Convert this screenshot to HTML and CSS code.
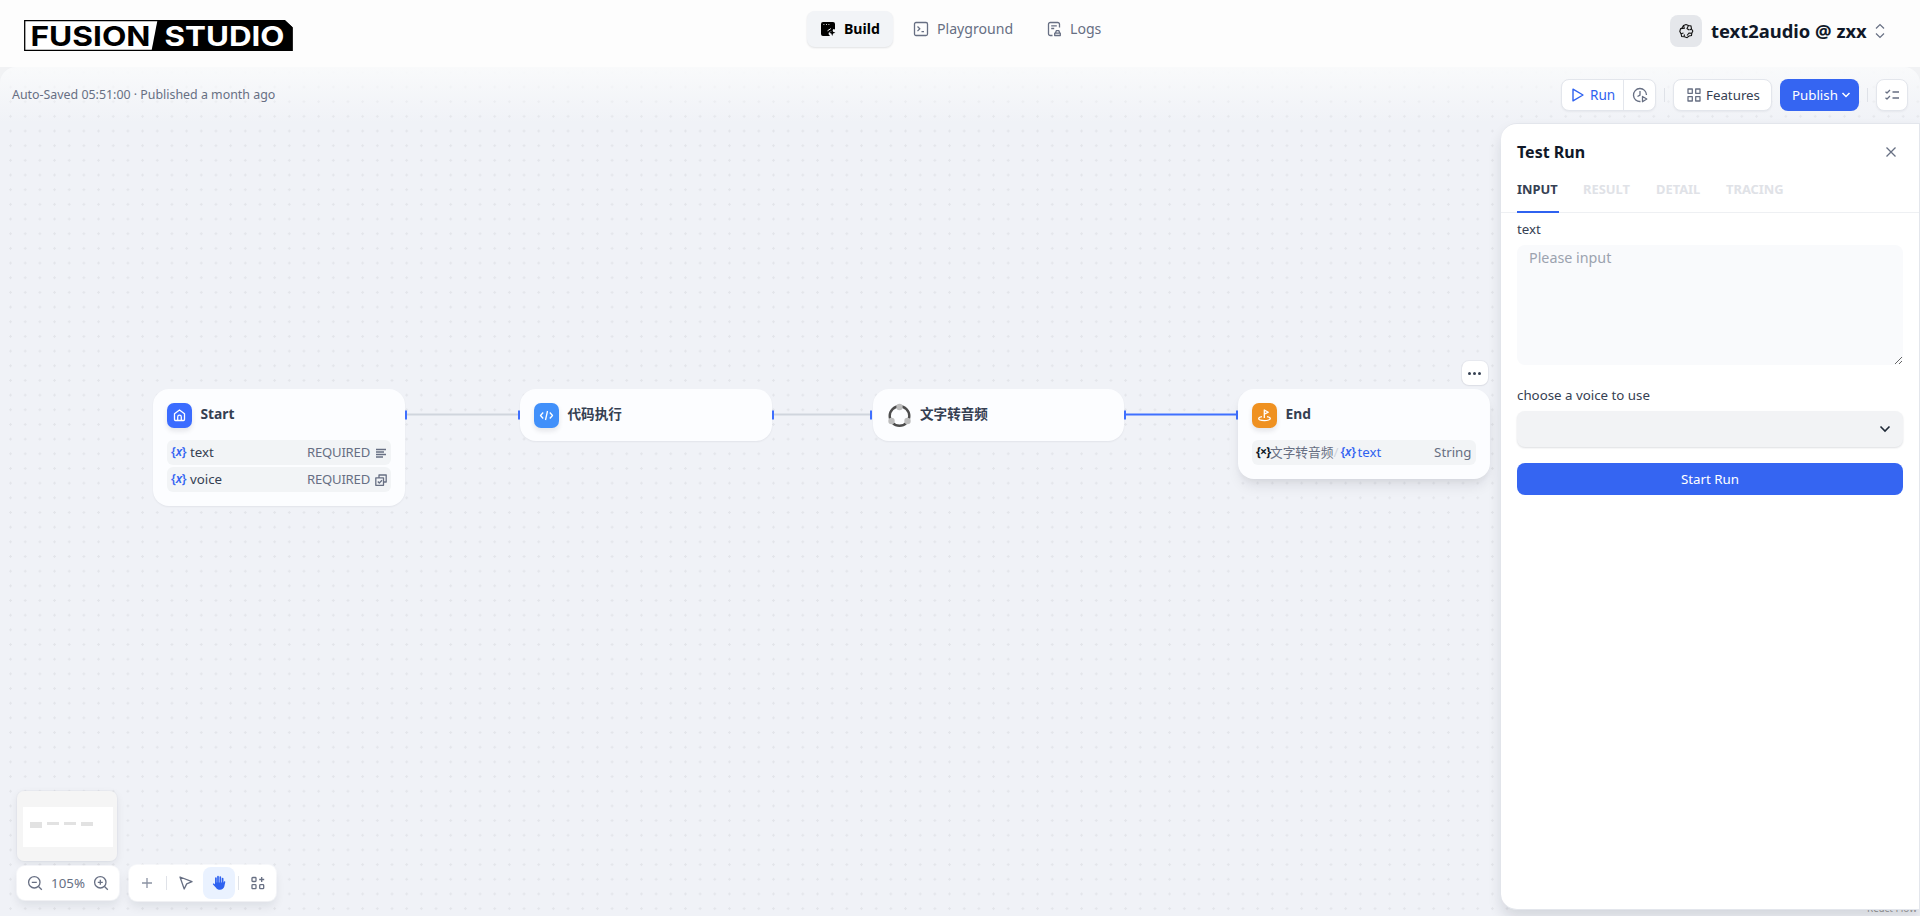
FILE: index.html
```html
<!DOCTYPE html>
<html lang="en">
<head>
<meta charset="utf-8">
<title>Fusion Studio</title>
<link rel="stylesheet" href="styles.css">
</head>
<body>
<header class="header">
  <svg class="logo" viewBox="0 0 270 32" width="270" height="32">
    <path d="M.7.700H260.500L268 7.500V30.300H.7Z" fill="#fff" stroke="#000" stroke-width="1.300"/>
    <path d="M133.500 0H260.800L268.600 7.500V31H127.500Z"/>
    <text class="logo-text" x="6.500" y="25.500" textLength="120" lengthAdjust="spacingAndGlyphs">FUSION</text>
    <text class="logo-text logo-light" x="140.500" y="25.500" textLength="120" lengthAdjust="spacingAndGlyphs">STUDIO</text>
  </svg>
  <nav class="nav">
    <a class="nav-item active">
      <svg class="i16" viewBox="0 0 16 16"><path d="M3 1h10a2 2 0 0 1 2 2v5.500l-1.500-.5-2 2.500L9 11l-.5 2 1.500 2H3a2 2 0 0 1-2-2V3a2 2 0 0 1 2-2z" fill="#000"/><path d="M3.500 3.500h.8M6 3.500h.8M8.500 3.500h.8" stroke="#fff" stroke-width="1"/><path d="M7.500 9.800 10.800 7.600" stroke="#fff" stroke-width="1"/><path d="m12.200 8.500.9 2.300 2.300.9-2.300.9-.9 2.400-.9-2.400-2.300-.9 2.300-.9z" fill="#000"/></svg>
      <span>Build</span></a>
    <a class="nav-item play">
      <svg class="i16 line" viewBox="0 0 16 16"><rect x="1.500" y="1.500" width="13" height="13" rx="1.500"/><path d="m4.500 5.500 2.300 2.300-2.300 2.300M8.500 10.700H11"/></svg>
      <span>Playground</span></a>
    <a class="nav-item logs">
      <svg class="i16 line" viewBox="0 0 16 16"><path d="M13.500 6.500V3.300A1.800 1.800 0 0 0 11.700 1.500H4.300a1.800 1.800 0 0 0-1.800 1.800v9.400a1.800 1.800 0 0 0 1.800 1.800H6.500M5.200 4.800h5.600M5.200 7.500h3"/><path d="M8.700 12.200h5.600v2.300H8.700zM9.500 12l.8-2.300h2.600l.8 2.300"/></svg>
      <span>Logs</span></a>
  </nav>
  <div class="app">
    <div class="app-icon"><svg width="16" height="16" viewBox="0 0 16 16" fill="none" stroke="#111" stroke-width="1.100"><path d="M5.500 2.500 8 1.500l2.500 1 2.500.5.500 3 1.300 2-1 2.300-.3 2.200-2.500.5-2 1.700-2.500-1-2.800-.2-.7-2.800L1.800 8.500l.7-2.700L4 5z"/><path d="m5.500 2.500.8 2.800-3.800.5M10.500 2.500 9 5.500l2 1.500M13.500 6l-2 1M3 10.700l2.500-.7M14 10.300l-3-.3-2 2.500M6 13.500l.5-2"/></svg></div>
    <span class="app-name">text2audio @ zxx</span>
    <svg class="updown" width="12" height="16" viewBox="0 0 12 16"><path d="m2 5.500 4-4 4 4M2 10.500l4 4 4-4"/></svg>
  </div>
</header>

<main class="canvas">
  <div class="toolbar">
    <span class="saved">Auto-Saved 05:51:00 · Published a month ago</span>
    <div class="actions">
      <div class="btn run-group">
        <span class="run"><svg width="16" height="16" viewBox="0 0 16 16"><path d="M3 2.200 13 8 3 13.800z" fill="none" stroke="#2f62f0" stroke-width="1.400" stroke-linejoin="round"/></svg><span>Run</span></span>
        <span class="history"><svg class="i16 line" viewBox="0 0 16 16"><path d="M8.500 14.500A6.500 6.500 0 1 1 14.500 8M8 4v4.200L5.500 9.500"/><path d="m10.500 9.500 4.300 2.500-4.300 2.700z"/></svg></span>
      </div>
      <i class="sep"></i>
      <div class="btn features"><svg width="14" height="14" viewBox="0 0 14 14" class="line"><path d="M1 1h4.300v4.300H1zM8.700 1H13v4.300H8.700zM1 8.700h4.300V13H1zM8.700 8.700H13V13H8.700z"/></svg><span>Features</span></div>
      <div class="publish"><span>Publish</span><svg width="10" height="10" viewBox="0 0 10 10"><path d="m1.500 3 3.500 3.500L8.500 3" fill="none" stroke="#fff" stroke-width="1.500"/></svg></div>
      <i class="sep"></i>
      <div class="btn checklist"><svg width="16" height="16" viewBox="0 0 16 16" class="line"><path d="m1.500 4.700 1.500 1.300 3-3M1.500 10.700 3 12l3-3M8.500 5H15M8.500 11H15"/></svg></div>
    </div>
  </div>

  <svg class="edges" width="1500" height="30">
    <path d="M406 14.500H519M774 14.500H871" stroke="#d0d5dd" stroke-width="2"/>
    <path d="M1125 14.500H1237" stroke="#3f70ff" stroke-width="2.200"/>
    <path d="M406 10.500v9M519 10.500v9M773 10.500v9M871 10.500v9M1125 10.500v9M1237 10.500v9" stroke="#3f70ff" stroke-width="2"/>
  </svg>

  <section class="node n-start">
    <div class="node-head"><i class="node-icon blue"><svg width="15" height="15" viewBox="0 0 15 15"><path d="M2.500 5.800 7.500 2l5 3.800V11.500a1 1 0 0 1-1 1h-8a1 1 0 0 1-1-1zM5.700 12.300V9a1.800 1.800 0 0 1 3.600 0v3.300"/></svg></i><b>Start</b></div>
    <div class="row"><em>{<i>x</i>}</em><span class="name">text</span><span class="req">REQUIRED</span><svg width="12" height="12" viewBox="0 0 12 12" class="line"><path d="M1 2.500h10M1 5h8M1 7.500h10M1 10h7"/></svg></div>
    <div class="row"><em>{<i>x</i>}</em><span class="name">voice</span><span class="req">REQUIRED</span><svg width="12" height="12" viewBox="0 0 12 12" class="line"><path d="M4 3.500V1h7.200v7H9M.8 3.800h7.700v7.500H.8zM2.800 7.500l1.500 1.500L7 6.200"/></svg></div>
  </section>

  <section class="node n-code">
    <div class="node-head"><i class="node-icon sky"><svg width="15" height="15" viewBox="0 0 15 15"><path d="M4.200 4.500 1.500 7.500l2.700 3M10.800 4.500l2.700 3-2.700 3M8.500 3l-2 9"/></svg></i><b>代码执行</b></div>
  </section>

  <section class="node n-audio">
    <div class="node-head"><i class="node-icon ring"><svg width="25" height="25" viewBox="0 0 25 25"><circle cx="12.500" cy="13" r="9.800" fill="none" stroke="#4d4d4d" stroke-width="2.400"/><g fill="#bdbdbd"><circle cx="12.500" cy="4" r="3.200"/><circle cx="4.500" cy="18" r="3.200"/><circle cx="20.500" cy="18" r="3.200"/></g></svg></i><b>文字转音频</b></div>
  </section>

  <div class="more"><i></i><i></i><i></i></div>
  <section class="node n-end">
    <div class="node-head"><i class="node-icon orange"><svg width="15" height="15" viewBox="0 0 15 15"><path d="M7.300 10V2l4 2.200-4 2M5 8.600c-2 .3-3.300 1-3.300 1.900 0 1.200 2.600 2.100 5.800 2.100s5.800-.9 5.800-2.100c0-.9-1.300-1.600-3.300-1.900"/></svg></i><b>End</b></div>
    <div class="row"><em class="dark">{×}</em><span class="source">文字转音频</span><span class="slash">/</span><em>{<i>x</i>}</em><span class="var">text</span><span class="type">String</span></div>
  </section>

  <div class="minimap">
    <svg width="90" height="40" viewBox="0 0 90 40"><path d="M0 0h90v40H0z" fill="#fff"/><path d="M7 15h12v6H7zM24 15h12v3H24zM41 15h12v3H41zM58 15h12v4H58z" fill="#e2e2e2"/></svg>
  </div>
  <div class="dock">
    <div class="zoombar">
      <svg class="i16 line" viewBox="0 0 16 16"><circle cx="7.300" cy="7.300" r="5.700"/><path d="m11.500 11.500 3.300 3.300M4.800 7.300h5"/></svg>
      <span>105%</span>
      <svg class="i16 line" viewBox="0 0 16 16"><circle cx="7.300" cy="7.300" r="5.700"/><path d="m11.500 11.500 3.300 3.300M4.800 7.300h5M7.300 4.800v5"/></svg>
    </div>
    <div class="tools">
      <span class="tool"><svg class="i16 line faint" viewBox="0 0 16 16"><path d="M8 3v10M3 8h10"/></svg></span>
      <i class="sep"></i>
      <span class="tool"><svg class="i16 line" viewBox="0 0 16 16"><path d="m2 2 12 4.700-5.300 2.200L6.200 14z"/></svg></span>
      <span class="tool on"><svg width="16" height="16" viewBox="0 0 16 16" fill="none" stroke="#2f62f0" stroke-linecap="round"><path d="M4.900 9V3.200M7 8V1.700M9.300 8V2M11.600 9V3.500" stroke-width="1.700"/><path d="M4 7.500h8.500c.2-1.500 2-1.800 1.800-.5l-1 4.500c-.5 2-2 3.200-4.300 3.200-2 0-3-.6-4-2L2 9.500c-.5-.9.600-1.500 1.300-.8L4 9.500z" fill="#2f62f0" stroke="none"/></svg></span>
      <i class="sep"></i>
      <span class="tool"><svg class="i16 line" viewBox="0 0 16 16"><rect x="2" y="2.500" width="4" height="4" rx=".8"/><rect x="2" y="9.700" width="4" height="4" rx=".8"/><rect x="9.700" y="9.700" width="4" height="4" rx=".8"/><path d="M11.700 2v5M9.200 4.500h5"/></svg></span>
    </div>
  </div>

  <div class="attribution">React Flow</div>
  <aside class="panel">
    <div class="panel-head"><h2>Test Run</h2><svg class="i16 line" viewBox="0 0 16 16"><path d="m3.500 3.500 9 9M12.500 3.500l-9 9"/></svg></div>
    <div class="tabs"><span class="tab on t1">INPUT</span><span class="tab t2">RESULT</span><span class="tab t3">DETAIL</span><span class="tab t4">TRACING</span></div>
    <div class="form">
      <label>text</label>
      <textarea class="area" placeholder="Please input"></textarea>
      <label class="second">choose a voice to use</label>
      <div class="select"><svg width="14" height="14" viewBox="0 0 14 14"><path d="m2.500 4.500 4.500 4.500 4.500-4.500" fill="none" stroke="#1f2937" stroke-width="1.600"/></svg></div>
      <div class="start">Start Run</div>
    </div>
  </aside>
</main>
</body>
</html>
```
FILE: styles.css
```css
* { box-sizing: border-box; }
body {
  margin: 0;
  width: 1920px;
  height: 916px;
  overflow: hidden;
  display: flex;
  flex-direction: column;
  background: #f1f2f4;
  font-family: "Noto Sans", "Noto Sans CJK SC", sans-serif;
  font-size: 13.3px;
  color: #354052;
  white-space: nowrap;
}
svg { display: block; flex: none; }
.i16 { width: 16px; height: 16px; }
.line { fill: none; stroke: #676f83; stroke-width: 1.3; stroke-linejoin: round; }
.faint { stroke: #8b92a3; }

.header {
  height: 67px;
  flex: none;
  display: grid;
  grid-template-columns: 807px 1fr 254px;
  align-items: start;
  background: #fdfdfd;
}
.logo { margin: 20px 0 0 24px; }
.logo-text { font-family: Inter, sans-serif; font-size: 27.5px; font-weight: 700; fill: #000; }
.logo-text.logo-light { fill: #fff; }
.nav { display: flex; gap: 8px; margin-top: 11px; }
.nav-item {
  height: 36px;
  padding: 0 12px 2px;
  display: flex;
  align-items: center;
  gap: 8px;
  font-size: 14.1px;
  color: #676f83;
}
.nav-item svg { margin-top: 2px; }
.nav-item.active { width: 86px; padding-left: 13px; background: #f2f4f7; color: #000; font-weight: 700; border-radius: 8px; box-shadow: 0 1px 2px rgba(16, 24, 40, .12); }
.nav-item.play { width: 125px; }
.app { display: flex; align-items: center; height: 39px; margin-top: 11px; padding-left: 4px; }
.app-icon { width: 32px; height: 32px; border-radius: 8px; background: #e5e7eb; display: grid; place-items: center; }
.app-name { width: 157px; margin: -1px 6px 0 9px; font-size: 18.4px; font-weight: 700; color: #101828; }
.updown path { fill: none; stroke: #676f83; stroke-width: 1.2; }

.canvas {
  position: relative;
  flex: 1;
  border-radius: 16px 16px 0 0;
  overflow: hidden;
  background: radial-gradient(circle at 7.340px 7.340px, #e3e5ea 1px, transparent 1.400px) 3.200px 42px / 14.675px 14.675px, #f0f2f7;
}
.toolbar {
  height: 56px;
  padding: 0 12px;
  display: flex;
  align-items: center;
  justify-content: space-between;
  background: linear-gradient(#f9fafb, rgba(249, 250, 251, 0));
}
.saved { font-size: 12.4px; color: #676f83; margin-top: -1px; }
.actions { display: flex; align-items: center; }
.btn { height: 32px; display: flex; align-items: center; background: #fff; border: 1px solid #e3e6ec; border-radius: 8px; box-shadow: 0 1px 2px rgba(16, 24, 40, .05); }
.run-group { width: 95px; }
.run { width: 62px; height: 30px; display: flex; align-items: center; gap: 4px; padding-left: 8px; border-right: 1px solid #e3e6ec; color: #2f62f0; font-size: 13.6px; }
.run span { margin-top: -2px; }
.history { flex: 1; display: grid; place-items: center; }
.sep { width: 1px; height: 14px; background: #dfe2e8; margin: 0 8px; }
.features { width: 99px; padding-left: 13px; gap: 5px; }
.publish { width: 79px; height: 32px; margin-left: 8px; padding-left: 12px; display: flex; align-items: center; gap: 3px; background: #3565f2; color: #fff; border-radius: 8px; }
.checklist { width: 32px; justify-content: center; }

.edges { position: absolute; left: 0; top: 333px; }
.node { position: absolute; top: 322px; width: 251.5px; padding: 13.500px 14px 0; border-radius: 16px; background: #fcfdff; box-shadow: 0 1px 2px rgba(16, 24, 40, .06); }
.n-start { left: 153px; height: 117px; }
.n-code { left: 520px; height: 52px; }
.n-audio { left: 872.5px; height: 52px; }
.n-end { left: 1238px; height: 90px; box-shadow: 0 9px 14px -3px rgba(16, 24, 40, .1), 0 3px 5px rgba(16, 24, 40, .03); }
.node-head { height: 25px; display: flex; align-items: center; gap: 8.5px; font-size: 13.6px; }
.node-head b { font-weight: 700; line-height: 22px; margin-top: -3px; }
.n-start b, .n-end b { font-size: 13.8px; font-weight: 700; }
.node-icon { width: 25px; height: 25px; border-radius: 7px; display: grid; place-items: center; box-shadow: 0 3px 5px rgba(16, 24, 40, .1); }
.node-icon path { fill: none; stroke: #fff; stroke-width: 1.300; stroke-linejoin: round; }
.blue { background: #3b6cff; }
.sky { background: #4190fa; }
.orange { background: #ef9121; }
.ring { box-shadow: none; }
.row { height: 25px; margin-top: 2.200px; padding: 0 4px; display: flex; align-items: center; border-radius: 6px; background: #f2f4f6; line-height: 18px; }
.row > span, .row > em { margin-top: -2px; }
.node-head + .row { margin-top: 12.500px; }
.row em { width: 14px; font-size: 12.4px; letter-spacing: -.2px; font-weight: 600; font-style: normal; color: #3565f2; }
.row em i { font-style: italic; }
.row em.dark { color: #101828; letter-spacing: -.8px; font-weight: 700; }
.name { margin-left: 5px; flex: 1; }
.req { font-size: 13.1px; letter-spacing: -.2px; color: #676f83; margin-right: 4.5px; }
.source { font-size: 12.7px; color: #676f83; }
.slash { width: 7px; color: #d0d5dd; }
.var { margin-left: 3px; flex: 1; color: #2f62f0; }
.type { color: #676f83; }
.more { position: absolute; left: 1461.5px; top: 294px; width: 26px; height: 24px; border-radius: 7px; background: #fff; box-shadow: 0 0 0 1px rgba(16, 24, 40, .04), 0 1px 2px rgba(16, 24, 40, .05); display: flex; align-items: center; justify-content: center; gap: 2px; }
.more i { width: 3px; height: 3px; border-radius: 50%; background: #354052; }

.minimap { position: absolute; left: 17px; top: 724px; width: 100px; height: 70px; padding: 16px 6px 0; background: #f5f5f5; border-radius: 7px; box-shadow: 0 0 0 1px rgba(16, 24, 40, .02), 0 3px 8px rgba(16, 24, 40, .08); }
.dock { position: absolute; left: 17px; top: 798px; display: flex; align-items: center; gap: 10px; }
.zoombar, .tools { background: #fff; border-radius: 8px; display: flex; align-items: center; box-shadow: 0 0 0 1px rgba(255, 255, 255, .5), 0 6px 10px rgba(16, 24, 40, .08); }
.zoombar { width: 102px; height: 34px; padding: 0 10px; justify-content: space-between; color: #676f83; }
.tools { width: 147px; height: 36px; padding-left: 2px; }
.tool { width: 32px; height: 32px; border-radius: 8px; display: grid; place-items: center; }
.tool.on { background: #eaf2ff; }
.tools .sep { margin: 0 3px; }
.tools .tool + .tool { margin-left: 1px; }

.attribution { position: absolute; right: 3px; bottom: 2px; font-size: 10px; line-height: 12px; color: #999; }
.panel { position: absolute; left: 1501px; top: 56px; width: 419px; height: 787px; border: 1px solid #e3e6ec; border-left: 0; border-radius: 16px 0 0 16px; background: #fff; box-shadow: 0 8px 14px rgba(16, 24, 40, .12); }
.panel-head { height: 56px; padding: 0 20px 0 16px; display: flex; align-items: center; justify-content: space-between; }
.panel h2 { margin: 0; font-size: 16px; font-weight: 700; color: #101828; }
.tabs { height: 33px; padding-left: 16px; display: flex; gap: 24px; border-bottom: 1px solid #eef0f3; font-size: 12.900px; font-weight: 700; color: #e0e2e7; }
.tab { height: 33px; line-height: 19px; border-bottom: 2px solid transparent; }
.tab.on { color: #354052; border-color: #2f62f0; }
.t1 { width: 42px; } .t2 { width: 49px; } .t3 { width: 46px; }
.form { padding: 0 16px; display: flex; flex-direction: column; }
.form label { height: 32px; line-height: 32px; }
.area { height: 120px; border: 0; border-radius: 8px; background: #f9fafc; padding: 3px 12px; resize: vertical; font: 14.300px/20px "Noto Sans", sans-serif; outline: none; }
.area::placeholder { color: #9ca3af; }
.form .second { margin-top: 14px; }
.select { height: 36px; border-radius: 8px; background: #f2f3f5; display: flex; align-items: center; justify-content: flex-end; padding-right: 11px; box-shadow: 0 1px 2px rgba(16, 24, 40, .14); }
.start { height: 32px; margin-top: 16px; border-radius: 8px; background: #3565f2; color: #fff; display: grid; place-items: center; }
```
